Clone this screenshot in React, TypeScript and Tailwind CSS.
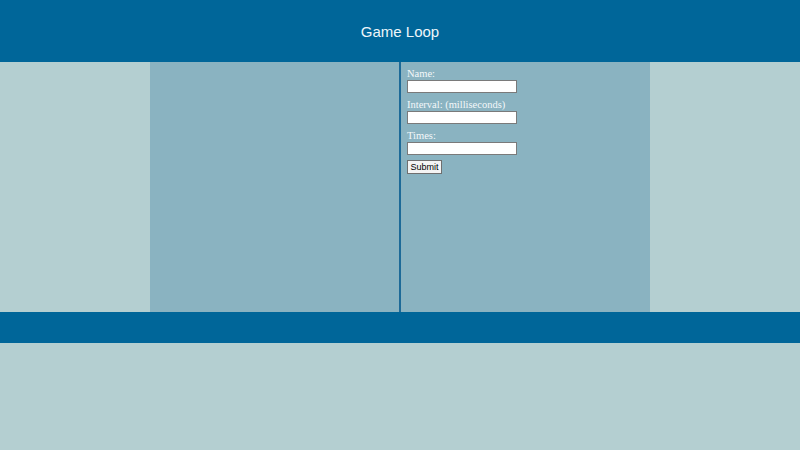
export default function App() {
  return (
    <div className="min-h-[450px] w-full bg-[#b4cfd1]">
      {/* Title bar */}
      <header className="flex h-[62px] items-center justify-center pt-[2px] bg-[#006699]">
        <h1 className="font-['Liberation_Sans',Arial,sans-serif] text-[15px] text-[#eef6fa]">Game Loop</h1>
      </header>

      {/* Two panels: canvas on the left, controls on the right */}
      <main className="mx-auto flex h-[250px] w-[500px] bg-[#8ab3c1]">
        <div className="w-[249px]" />
        <div className="w-[2px] bg-[#1d6a98]" />
        <form
          className="flex flex-col pl-[6px] pt-[5px] font-['Liberation_Serif','Times_New_Roman',serif] text-[10.5px] text-[#f4f8fa]"
          onSubmit={(e) => e.preventDefault()}
        >
          {["Name:", "Interval: (milliseconds)", "Times:"].map((label) => (
            <label key={label} className="mb-[5px] flex flex-col">
              <span className="h-[13px] leading-[13px]">{label}</span>
              <input
                type="text"
                className="h-[13px] w-[110px] border border-[#7a7a7a] bg-white text-[10px] text-black outline-none"
              />
            </label>
          ))}
          <button
            type="submit"
            className="h-[14px] w-[35px] border border-[#6f6f6f] bg-[#f4f4f4] font-['Liberation_Sans',Arial,sans-serif] text-[9px] leading-[12px] text-black"
          >
            Submit
          </button>
        </form>
      </main>

      <footer className="h-[31px] bg-[#006699]" />
    </div>
  );
}
